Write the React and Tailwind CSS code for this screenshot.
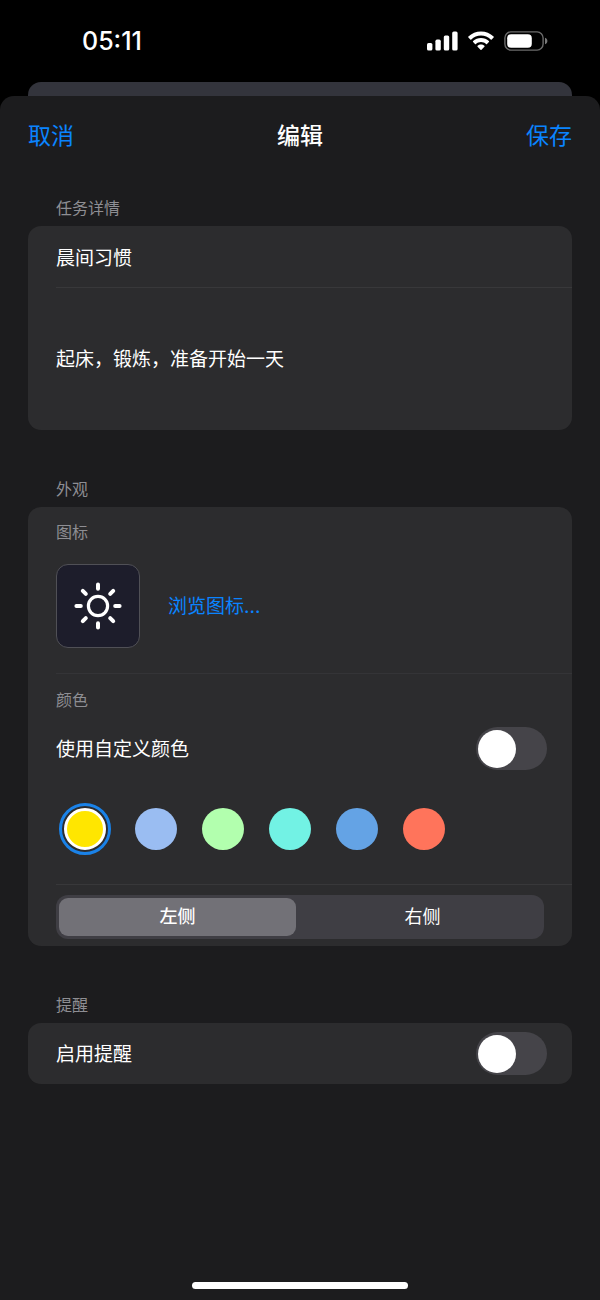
import { useState } from "react";

const colors = [
  { name: "黄色", className: "bg-[#ffe600]" },
  { name: "淡蓝", className: "bg-[#9abdf2]" },
  { name: "浅绿", className: "bg-[#b2ffae]" },
  { name: "青色", className: "bg-[#72f2e4]" },
  { name: "蓝色", className: "bg-[#64a3e5]" },
  { name: "珊瑚红", className: "bg-[#ff745b]" },
];

function StatusBar() {
  return (
    <div className="flex h-[82px] items-center justify-between pl-[82px] pr-[52px]">
      <span className="text-[25px] font-medium leading-8">05:11</span>
      <div className="flex items-center gap-2.5">
        <svg width="31" height="20" viewBox="0 0 31 20" fill="currentColor" aria-hidden="true">
          <rect x="0" y="12" width="5.4" height="7.6" rx="1.6" />
          <rect x="8.4" y="8.6" width="5.4" height="11" rx="1.6" />
          <rect x="16.8" y="4.4" width="5.4" height="15.2" rx="1.6" />
          <rect x="25.2" y="0.4" width="5.4" height="19.2" rx="1.6" />
        </svg>
        <svg width="26" height="20" viewBox="0 0 26 20" fill="currentColor" aria-hidden="true">
          <path d="M13 0.5C8.2 0.5 3.7 2.4 0.4 5.6a.7.7 0 0 0 0 1l1.9 1.9c.3.3.7.3 1 0C5.9 6 9.3 4.6 13 4.6s7.100 1.400 9.7 3.9c.3.3.7.3 1 0l1.9-1.9a.7.7 0 0 0 0-1C22.3 2.4 17.8.5 13 .5Z" />
          <path d="M13 7c-3 0-5.800 1.200-7.9 3.1a.7.7 0 0 0 0 1L7 13c.3.3.7.3 1 0 1.300-1.200 3.100-1.900 5-1.900s3.7.7 5 1.900c.3.3.7.3 1 0l1.900-1.900a.7.7 0 0 0 0-1C18.800 8.200 16 7 13 7Z" />
          <path d="M13 13.500c-1.300 0-2.500.5-3.400 1.300a.7.7 0 0 0 0 1l2.900 3c.3.3.7.3 1 0l2.900-3a.7.7 0 0 0 0-1c-.9-.8-2.100-1.300-3.400-1.300Z" />
        </svg>
        <svg width="44" height="20" viewBox="0 0 44 20" fill="none" aria-hidden="true">
          <rect x="0.9" y="0.9" width="38.2" height="18.2" rx="6" stroke="#6b6b6b" strokeWidth="1.4" />
          <rect x="3.2" y="3.2" width="24.6" height="13.6" rx="4" fill="white" />
          <path d="M41 6.8c1.5.5 2.4 1.7 2.4 3.2s-.9 2.7-2.4 3.2Z" fill="#7a7a7a" />
        </svg>
      </div>
    </div>
  );
}

function Section({ title, children }) {
  return (
    <section>
      <h2 className="mb-1.5 px-7 text-[16px] leading-6 text-[#8e8e93]">{title}</h2>
      <div className="rounded-[13px] bg-[#2c2c2e] pl-7">{children}</div>
    </section>
  );
}

function SwitchRow({ id, label, checked, onChange }) {
  return (
    <div className="flex items-center justify-between pr-[25px]">
      <label htmlFor={id} className="pt-0.5 text-[19px] leading-7">{label}</label>
      <input
        id={id}
        type="checkbox"
        role="switch"
        checked={checked}
        onChange={(e) => onChange(e.target.checked)}
        className="flex h-[43px] w-[71px] cursor-pointer appearance-none items-center rounded-full bg-[#454449] px-0.5 before:size-[38px] before:rounded-full before:bg-white checked:justify-end checked:bg-[#30d158]"
      />
    </div>
  );
}

function SunIcon() {
  return (
    <svg width="48" height="48" viewBox="0 0 48 48" fill="none" stroke="white" strokeWidth="4" strokeLinecap="round" aria-hidden="true">
      <circle cx="24" cy="24" r="9.6" strokeWidth="3.2" />
      <path d="M24 2.400v4.400M24 41.200v4.400M2.400 24h4.400M41.200 24h4.400M8.800 8.800l3 3M36.200 36.200l3 3M8.800 39.200l3-3M36.200 11.800l3-3" />
    </svg>
  );
}

export default function App() {
  const [title, setTitle] = useState("晨间习惯");
  const [details, setDetails] = useState("起床，锻炼，准备开始一天");
  const [customColor, setCustomColor] = useState(false);
  const [color, setColor] = useState("黄色");
  const [side, setSide] = useState("左侧");
  const [reminder, setReminder] = useState(false);

  return (
    <div className="flex min-h-screen flex-col bg-black font-['Inter','Noto_Sans_CJK_SC',sans-serif] text-white" lang="zh-CN">
      <StatusBar />
      <div className="mx-7 h-3.5 rounded-t-[13px] bg-[#33343c]" />

      <main className="flex flex-1 flex-col rounded-t-[14px] bg-[#1c1c1e]">
        <header className="grid h-20 grid-cols-3 items-center px-7 text-[23px] leading-8">
          <button type="button" className="cursor-pointer justify-self-start text-[#0a84ff]">取消</button>
          <h1 className="text-center font-medium">编辑</h1>
          <button type="button" className="cursor-pointer justify-self-end text-[#0a84ff]">保存</button>
        </header>

        <form className="flex flex-col gap-[47px] px-7 pt-5" onSubmit={(e) => e.preventDefault()}>
          <Section title="任务详情">
            <div className="border-b border-[#38383a] py-4">
              <input
                type="text"
                aria-label="任务名称"
                value={title}
                onChange={(e) => setTitle(e.target.value)}
                className="block h-[29px] w-full bg-transparent pr-7 text-[19px] leading-7 outline-none"
              />
            </div>
            <div className="pb-14 pt-[58px]">
              <textarea
                rows={1}
                aria-label="任务描述"
                value={details}
                onChange={(e) => setDetails(e.target.value)}
                className="block w-full resize-none bg-transparent pr-7 text-[19px] leading-7 outline-none"
              />
            </div>
          </Section>

          <Section title="外观">
            <div className="border-b border-[#343437] pb-[25px] pt-[13px]">
              <h3 className="text-[16px] leading-6 text-[#8e8e93]">图标</h3>
              <div className="mt-5 flex items-center gap-7">
                <div className="flex size-[84px] items-center justify-center rounded-xl border border-[#505056] bg-[#1d1d2b]">
                  <SunIcon />
                </div>
                <button type="button" className="cursor-pointer pt-0.5 text-[19px] leading-7 text-[#0a84ff]">浏览图标...</button>
              </div>
            </div>

            <div className="border-b border-[#38383a] pb-[34px] pt-3.5">
              <h3 className="mb-[15px] text-[16px] leading-6 text-[#8e8e93]">颜色</h3>
              <SwitchRow id="custom-color" label="使用自定义颜色" checked={customColor} onChange={setCustomColor} />
              <div className="mt-[38px] flex gap-[25px] pl-1" role="radiogroup" aria-label="颜色">
                {colors.map((c) => (
                  <input
                    key={c.name}
                    type="radio"
                    name="color"
                    aria-label={c.name}
                    checked={color === c.name}
                    onChange={() => setColor(c.name)}
                    className={`size-[42px] cursor-pointer appearance-none rounded-full checked:mx-1 checked:border-3 checked:border-white checked:outline-3 checked:outline-offset-2 checked:outline-[#1a82e8] ${c.className}`}
                  />
                ))}
              </div>
            </div>

            <div className="pb-[7px] pr-7 pt-2.5">
              <div className="flex h-11 gap-2 rounded-xl bg-[#3f3e44] p-[3px]" role="radiogroup" aria-label="位置">
                {["左侧", "右侧"].map((s) => (
                  <label key={s} className="flex flex-1 cursor-pointer items-center justify-center rounded-[9px] text-[18px] leading-6 has-checked:bg-[#727177] has-checked:font-medium">
                    <input type="radio" name="side" className="sr-only" checked={side === s} onChange={() => setSide(s)} />
                    {s}
                  </label>
                ))}
              </div>
            </div>
          </Section>

          <Section title="提醒">
            <div className="py-[9px]">
              <SwitchRow id="reminder" label="启用提醒" checked={reminder} onChange={setReminder} />
            </div>
          </Section>
        </form>

        <div className="mt-auto flex justify-center pb-[11px] pt-8">
          <div className="h-[7px] w-[36%] rounded-full bg-white" />
        </div>
      </main>
    </div>
  );
}
